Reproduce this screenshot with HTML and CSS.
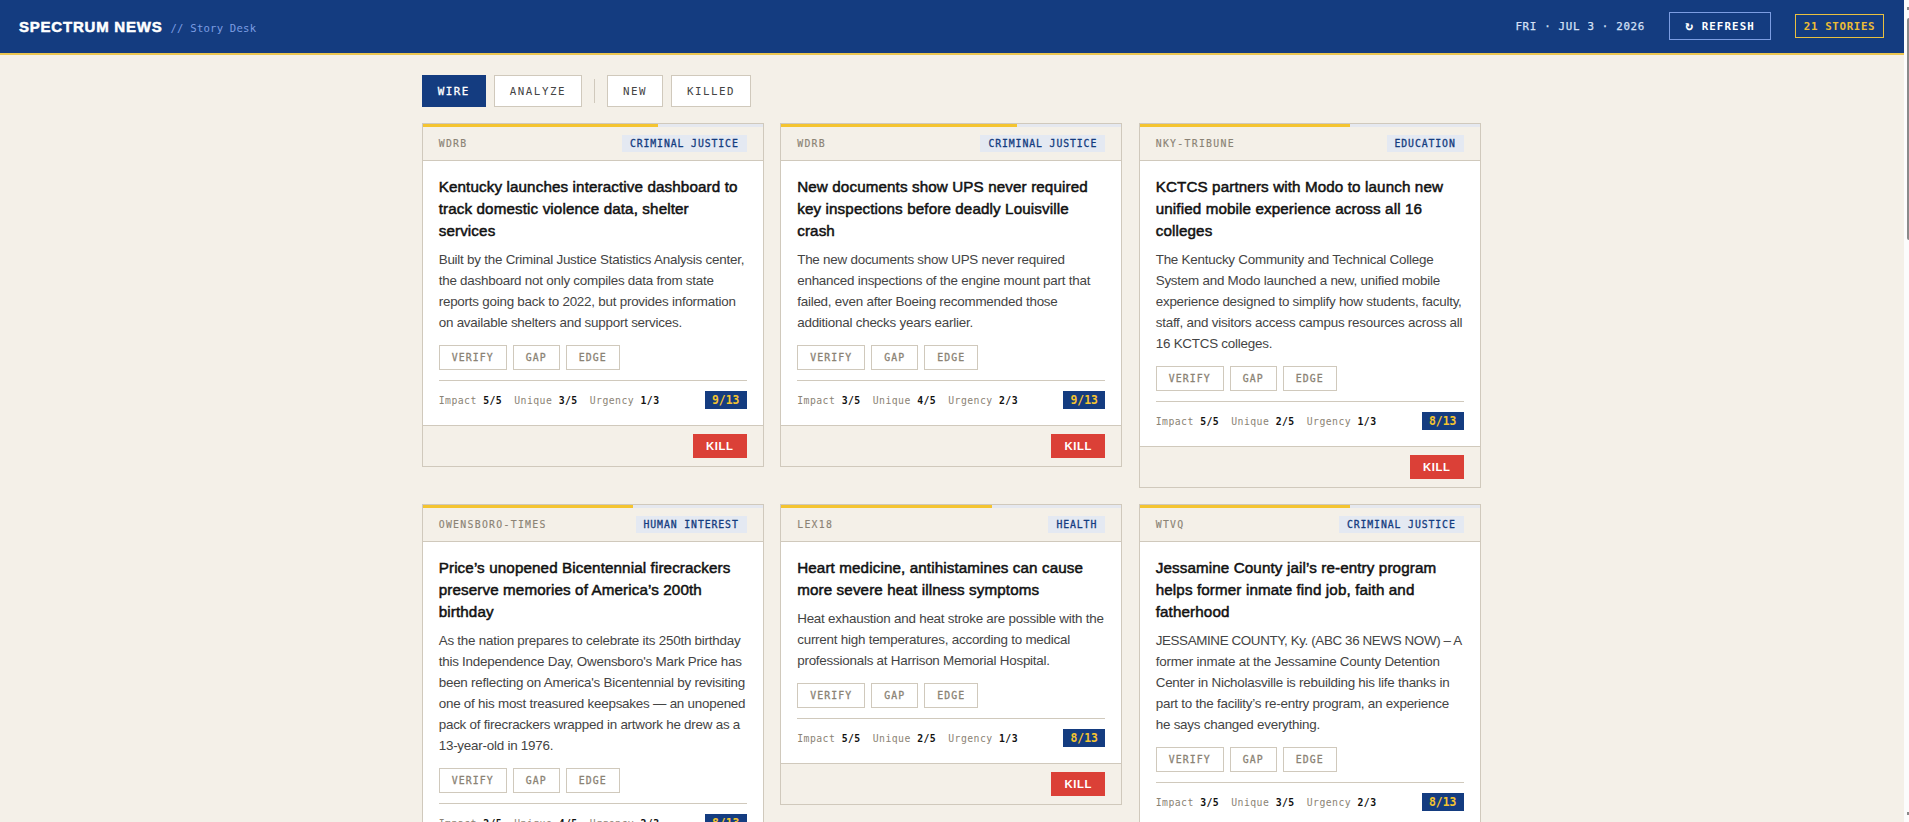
FILE: index.html
```html
<!DOCTYPE html>
<html lang="en">
<head>
    <meta charset="UTF-8">
    <meta name="viewport" content="width=device-width, initial-scale=1.0">
    <title>Spectrum News - Story Desk</title>
    <link rel="stylesheet" href="styles.css">
</head>
<body>
<div class="page">
    <header class="topbar">
        <div class="brand">
            <span class="brand-name">SPECTRUM NEWS</span>
            <span class="brand-sub">// Story Desk</span>
        </div>
        <div class="topbar-right">
            <span class="date">FRI · JUL 3 · 2026</span>
            <button class="refresh"><span class="refresh-icon">↻</span> REFRESH</button>
            <span class="count">21 STORIES</span>
        </div>
    </header>

    <main class="main">
        <nav class="filters">
            <button class="tab active">WIRE</button>
            <button class="tab">ANALYZE</button>
            <span class="divider"></span>
            <button class="tab">NEW</button>
            <button class="tab">KILLED</button>
        </nav>

        <div class="grid">
            <article class="card">
                <div class="bar"><div class="bar-fill" style="width: 69.23%"></div></div>
                <div class="card-head"><span class="source">WDRB</span><span class="beat">CRIMINAL JUSTICE</span></div>
                <div class="card-body">
                    <h2>Kentucky launches interactive dashboard to<br>track domestic violence data, shelter<br>services</h2>
                    <p>Built by the Criminal Justice Statistics Analysis center,<br>the dashboard not only compiles data from state<br>reports going back to 2022, but provides information<br>on available shelters and support services.</p>
                    <div class="tools"><button>VERIFY</button><button>GAP</button><button>EDGE</button></div>
                    <div class="scores"><span>Impact <b>5/5</b></span><span>Unique <b>3/5</b></span><span>Urgency <b>1/3</b></span><span class="total">9/13</span></div>
                </div>
                <div class="card-foot"><button class="kill">KILL</button></div>
            </article>

            <article class="card">
                <div class="bar"><div class="bar-fill" style="width: 69.23%"></div></div>
                <div class="card-head"><span class="source">WDRB</span><span class="beat">CRIMINAL JUSTICE</span></div>
                <div class="card-body">
                    <h2>New documents show UPS never required<br>key inspections before deadly Louisville<br>crash</h2>
                    <p>The new documents show UPS never required<br>enhanced inspections of the engine mount part that<br>failed, even after Boeing recommended those<br>additional checks years earlier.</p>
                    <div class="tools"><button>VERIFY</button><button>GAP</button><button>EDGE</button></div>
                    <div class="scores"><span>Impact <b>3/5</b></span><span>Unique <b>4/5</b></span><span>Urgency <b>2/3</b></span><span class="total">9/13</span></div>
                </div>
                <div class="card-foot"><button class="kill">KILL</button></div>
            </article>

            <article class="card">
                <div class="bar"><div class="bar-fill" style="width: 61.9%"></div></div>
                <div class="card-head"><span class="source">NKY-TRIBUNE</span><span class="beat">EDUCATION</span></div>
                <div class="card-body">
                    <h2>KCTCS partners with Modo to launch new<br>unified mobile experience across all 16<br>colleges</h2>
                    <p>The Kentucky Community and Technical College<br>System and Modo launched a new, unified mobile<br>experience designed to simplify how students, faculty,<br>staff, and visitors access campus resources across all<br>16 KCTCS colleges.</p>
                    <div class="tools"><button>VERIFY</button><button>GAP</button><button>EDGE</button></div>
                    <div class="scores"><span>Impact <b>5/5</b></span><span>Unique <b>2/5</b></span><span>Urgency <b>1/3</b></span><span class="total">8/13</span></div>
                </div>
                <div class="card-foot"><button class="kill">KILL</button></div>
            </article>

            <article class="card">
                <div class="bar"><div class="bar-fill" style="width: 61.9%"></div></div>
                <div class="card-head"><span class="source">OWENSBORO-TIMES</span><span class="beat">HUMAN INTEREST</span></div>
                <div class="card-body">
                    <h2>Price’s unopened Bicentennial firecrackers<br>preserve memories of America’s 200th<br>birthday</h2>
                    <p>As the nation prepares to celebrate its 250th birthday<br>this Independence Day, Owensboro's Mark Price has<br>been reflecting on America's Bicentennial by revisiting<br>one of his most treasured keepsakes — an unopened<br>pack of firecrackers wrapped in artwork he drew as a<br>13-year-old in 1976.</p>
                    <div class="tools"><button>VERIFY</button><button>GAP</button><button>EDGE</button></div>
                    <div class="scores"><span>Impact <b>2/5</b></span><span>Unique <b>4/5</b></span><span>Urgency <b>2/3</b></span><span class="total">8/13</span></div>
                </div>
                <div class="card-foot"><button class="kill">KILL</button></div>
            </article>

            <article class="card">
                <div class="bar"><div class="bar-fill" style="width: 61.9%"></div></div>
                <div class="card-head"><span class="source">LEX18</span><span class="beat">HEALTH</span></div>
                <div class="card-body">
                    <h2>Heart medicine, antihistamines can cause<br>more severe heat illness symptoms</h2>
                    <p>Heat exhaustion and heat stroke are possible with the<br>current high temperatures, according to medical<br>professionals at Harrison Memorial Hospital.</p>
                    <div class="tools"><button>VERIFY</button><button>GAP</button><button>EDGE</button></div>
                    <div class="scores"><span>Impact <b>5/5</b></span><span>Unique <b>2/5</b></span><span>Urgency <b>1/3</b></span><span class="total">8/13</span></div>
                </div>
                <div class="card-foot"><button class="kill">KILL</button></div>
            </article>

            <article class="card">
                <div class="bar"><div class="bar-fill" style="width: 61.9%"></div></div>
                <div class="card-head"><span class="source">WTVQ</span><span class="beat">CRIMINAL JUSTICE</span></div>
                <div class="card-body">
                    <h2>Jessamine County jail’s re-entry program<br>helps former inmate find job, faith and<br>fatherhood</h2>
                    <p><span class="dateline">JESSAMINE COUNTY, Ky. (ABC 36 NEWS NOW) – A</span><br>former inmate at the Jessamine County Detention<br>Center in Nicholasville is rebuilding his life thanks in<br>part to the facility’s re-entry program, an experience<br>he says changed everything.</p>
                    <div class="tools"><button>VERIFY</button><button>GAP</button><button>EDGE</button></div>
                    <div class="scores"><span>Impact <b>3/5</b></span><span>Unique <b>3/5</b></span><span>Urgency <b>2/3</b></span><span class="total">8/13</span></div>
                </div>
                <div class="card-foot"><button class="kill">KILL</button></div>
            </article>
        </div>
    </main>
</div>
<div class="scrollbar"><span class="arrow up"></span><div class="thumb"></div><span class="arrow down"></span></div>
</body>
</html>
```

FILE: styles.css
```css
* {
    box-sizing: border-box;
}

body {
    margin: 0;
    display: flex;
    height: 100vh;
    overflow: hidden;
    background: #f4f0e8;
    color: #111;
    font-family: "Liberation Sans", Arial, sans-serif;
}

button {
    margin: 0;
    padding: 0;
    border: none;
    font-family: "DejaVu Sans Mono", monospace;
    cursor: pointer;
    white-space: nowrap;
}

.page {
    flex: 1;
    height: 100vh;
    overflow: hidden;
}

.topbar {
    display: flex;
    justify-content: space-between;
    align-items: center;
    height: 55px;
    padding: 0 20px 1px 19px;
    background: #143c80;
    border-bottom: 2px solid #ecc650;
}

.brand {
    display: flex;
    align-items: baseline;
    gap: 8px;
}

.brand-name {
    color: #fff;
    font-size: 15px;
    font-weight: 700;
    letter-spacing: 0.78px;
    -webkit-text-stroke: 0.5px #fff;
}

.brand-sub {
    color: #7c9de2;
    font: 10.6px "DejaVu Sans Mono", monospace;
    letter-spacing: 0.22px;
}

.topbar-right {
    display: flex;
    align-items: center;
    gap: 24px;
    font-family: "DejaVu Sans Mono", monospace;
    font-size: 10.8px;
}

.date {
    color: #d5e0f6;
    letter-spacing: 0.7px;
    -webkit-text-stroke: 0.25px #d5e0f6;
}

.refresh {
    width: 102px;
    height: 28px;
    border: 1px solid #7c9de2;
    background: transparent;
    color: #fff;
    font-size: 10.8px;
    font-weight: 700;
    letter-spacing: 1.1px;
}

.refresh-icon {
    font-size: 13px;
    line-height: 10px;
}

.count {
    width: 89px;
    height: 24px;
    border: 1px solid #e9c040;
    color: #edbd35;
    font-weight: 700;
    line-height: 23px;
    text-align: center;
    letter-spacing: 0.65px;
}

.main {
    width: 1060.6px;
    margin: 0 auto;
    padding-top: 20px;
}

.filters {
    display: flex;
    align-items: center;
    gap: 8px;
    margin-bottom: 16px;
}

.tab {
    height: 32px;
    padding: 0 15px;
    border: 1px solid #d0c9bc;
    background: #fff;
    color: #444;
    font-size: 10.8px;
    letter-spacing: 1.52px;
}

.tab.active {
    background: #143c80;
    border-color: #143c80;
    color: #fff;
    -webkit-text-stroke: 0.3px #fff;
}

.divider {
    width: 1px;
    height: 24px;
    margin: 0 4px;
    background: #d0c9bc;
}

.grid {
    display: grid;
    grid-template-columns: repeat(3, 342px);
    gap: 16px 16.5px;
    align-items: start;
}

.card {
    border: 1px solid #d0c9bc;
    background: #fff;
}

.bar {
    height: 3px;
    background: #e5e8ef;
}

.bar-fill {
    height: 3px;
    background: #f4c430;
}

.card-head {
    display: flex;
    justify-content: space-between;
    align-items: center;
    height: 34px;
    padding: 0 16px;
    background: #f4f0e8;
    border-bottom: 1px solid #d0c9bc;
    font: 9.8px "DejaVu Sans Mono", monospace;
}

.source {
    color: #8b8375;
    letter-spacing: 1.3px;
    -webkit-text-stroke: 0.15px #8b8375;
}

.beat {
    height: 17px;
    padding: 0 8px;
    background: #e4e9f2;
    color: #143c80;
    line-height: 17px;
    letter-spacing: 0.9px;
    -webkit-text-stroke: 0.3px #143c80;
}

.card-body {
    padding: 14.8px 16px 16px;
    white-space: nowrap;
}

h2 {
    margin: 0 0 8.5px;
    font-size: 15.2px;
    line-height: 22px;
    font-weight: 400;
    letter-spacing: 0.12px;
    -webkit-text-stroke: 0.5px #111;
}

p {
    margin: 0 0 11.3px;
    color: #444;
    font-size: 13.4px;
    line-height: 20.9px;
    letter-spacing: -0.23px;
}

.dateline {
    letter-spacing: -0.38px;
}

.tools {
    display: flex;
    gap: 6px;
    margin-bottom: 10px;
}

.tools button {
    height: 25px;
    padding: 0 12px;
    border: 1px solid #d0c9bc;
    background: #fff;
    color: #8b8375;
    font-size: 9.8px;
    letter-spacing: 1.1px;
    -webkit-text-stroke: 0.3px #8b8375;
}

.scores {
    display: flex;
    align-items: center;
    gap: 12px;
    padding-top: 10px;
    border-top: 1px solid #d0c9bc;
    color: #8b8375;
    font: 9.8px "DejaVu Sans Mono", monospace;
    letter-spacing: 0.45px;
}

.scores b {
    color: #111;
}

.scores .total {
    width: 42px;
    height: 18px;
    margin-left: auto;
    background: #143c80;
    color: #f4c430;
    font-size: 11.4px;
    font-weight: 700;
    line-height: 18px;
    text-align: center;
    letter-spacing: 0;
}

.card-foot {
    display: flex;
    justify-content: flex-end;
    padding: 8px 16px;
    background: #f4f0e8;
    border-top: 1px solid #d0c9bc;
}

.kill {
    width: 54px;
    height: 24px;
    background: #db4037;
    color: #fff;
    font-family: "Liberation Sans", Arial, sans-serif;
    font-size: 11.3px;
    font-weight: 700;
    letter-spacing: 0.6px;
}

.scrollbar {
    display: flex;
    flex-direction: column;
    width: 5px;
    height: 100vh;
    padding: 7px 0 7px 3px;
    background: #fcfcfc;
}

.arrow {
    width: 2px;
    height: 3px;
    background: #8a8a8a;
}

.thumb {
    height: 222px;
    margin: 8px 0 auto;
    border-radius: 2px 0 0 2px;
    background: #8a8a8a;
}
```
